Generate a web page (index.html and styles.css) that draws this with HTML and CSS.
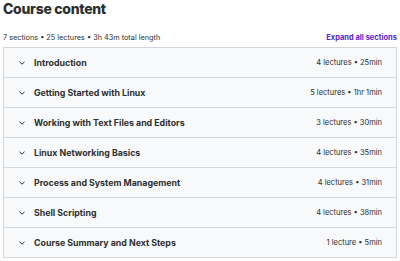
FILE: index.html
```html
<!DOCTYPE html>
<html lang="en">

<head>
    <meta charset="UTF-8">
    <meta name="viewport" content="width=device-width, initial-scale=1.0">
    <title>Course content</title>
    <link rel="stylesheet" href="styles.css">
</head>

<body>
    <div class="curriculum">
        <h2 class="title">Course content</h2>
        <div class="summary">
            <span class="summary-text">7 sections • 25 lectures • 3h 43m total length</span>
            <button class="expand-all">Expand all sections</button>
        </div>
        <div class="sections">
            <div class="section">
                <span class="chevron"><svg width="8" height="8" viewBox="0 0 8 8"><path d="M1.5 2.8 L4 5.2 L6.5 2.8" fill="none" stroke="#2d2f31" stroke-width="1"/></svg></span>
                <span class="section-title">Introduction</span>
                <span class="section-meta">4 lectures • 25min</span>
            </div>
            <div class="section">
                <span class="chevron"><svg width="8" height="8" viewBox="0 0 8 8"><path d="M1.5 2.8 L4 5.2 L6.5 2.8" fill="none" stroke="#2d2f31" stroke-width="1"/></svg></span>
                <span class="section-title">Getting Started with Linux</span>
                <span class="section-meta">5 lectures • 1hr 1min</span>
            </div>
            <div class="section">
                <span class="chevron"><svg width="8" height="8" viewBox="0 0 8 8"><path d="M1.5 2.8 L4 5.2 L6.5 2.8" fill="none" stroke="#2d2f31" stroke-width="1"/></svg></span>
                <span class="section-title">Working with Text Files and Editors</span>
                <span class="section-meta">3 lectures • 30min</span>
            </div>
            <div class="section">
                <span class="chevron"><svg width="8" height="8" viewBox="0 0 8 8"><path d="M1.5 2.8 L4 5.2 L6.5 2.8" fill="none" stroke="#2d2f31" stroke-width="1"/></svg></span>
                <span class="section-title">Linux Networking Basics</span>
                <span class="section-meta">4 lectures • 35min</span>
            </div>
            <div class="section">
                <span class="chevron"><svg width="8" height="8" viewBox="0 0 8 8"><path d="M1.5 2.8 L4 5.2 L6.5 2.8" fill="none" stroke="#2d2f31" stroke-width="1"/></svg></span>
                <span class="section-title">Process and System Management</span>
                <span class="section-meta">4 lectures • 31min</span>
            </div>
            <div class="section">
                <span class="chevron"><svg width="8" height="8" viewBox="0 0 8 8"><path d="M1.5 2.8 L4 5.2 L6.5 2.8" fill="none" stroke="#2d2f31" stroke-width="1"/></svg></span>
                <span class="section-title">Shell Scripting</span>
                <span class="section-meta">4 lectures • 38min</span>
            </div>
            <div class="section">
                <span class="chevron"><svg width="8" height="8" viewBox="0 0 8 8"><path d="M1.5 2.8 L4 5.2 L6.5 2.8" fill="none" stroke="#2d2f31" stroke-width="1"/></svg></span>
                <span class="section-title">Course Summary and Next Steps</span>
                <span class="section-meta">1 lecture • 5min</span>
            </div>
        </div>
    </div>
</body>

</html>
```

FILE: styles.css
```css
/* Page */

body {
    margin: 0;
    background-color: #ffffff;
    font-family: 'Inter', 'Noto Sans', sans-serif;
    color: #2d2f31;
}

.curriculum {
    padding: 0 3px;
}

/* Heading */

.title {
    margin: 0;
    font-size: 14px;
    font-weight: 800;
    line-height: 18px;
    letter-spacing: -0.3px;
}

.summary {
    display: flex;
    justify-content: space-between;
    align-items: center;
    margin-top: 9px;
    height: 20px;
}

.summary-text {
    font-size: 7.3px;
}

.expand-all {
    padding: 0;
    border: none;
    background: none;
    font-family: inherit;
    font-size: 7.5px;
    font-weight: 700;
    color: #5624d0;
    cursor: pointer;
}

/* Sections */

.sections {
    border: 1px solid #d1d7dc;
    border-bottom: none;
}

.section {
    display: flex;
    align-items: center;
    height: 29px;
    padding: 0 14px;
    background-color: #f7f9fa;
    border-bottom: 1px solid #d1d7dc;
}

.chevron {
    display: flex;
    width: 8px;
    margin-right: 8px;
}

.section-title {
    flex: 1;
    font-size: 8.8px;
    font-weight: 700;
}

.section-meta {
    font-size: 7.5px;
}
```
